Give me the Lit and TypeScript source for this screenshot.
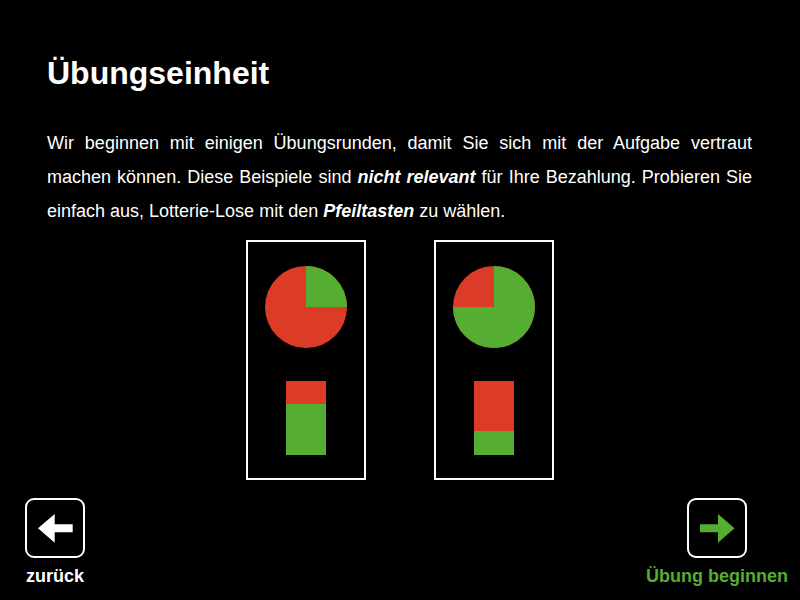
import { LitElement, html, css, svg } from "lit";
import { customElement, property } from "lit/decorators.js";

/** A lottery ticket: a pie and a stacked bar, each split into green and red. */
@customElement("lottery-ticket")
class LotteryTicket extends LitElement {
  @property({ type: Number }) degrees = 90;
  @property({ type: Number }) level = 50;

  static styles = css`
    :host {
      display: block;
      box-sizing: border-box;
      width: 120px;
      padding: 24px 0 23px;
      border: 2px solid #fff;
    }
    .content {
      display: flex;
      flex-direction: column;
      align-items: center;
      gap: 33px;
    }
    .pie {
      display: block;
      width: 82px;
      height: 82px;
    }
    .red {
      fill: #dc3b27;
    }
    .green {
      fill: #55ad31;
    }
    .bar {
      display: flex;
      flex-direction: column;
      justify-content: flex-end;
      width: 40px;
      height: 74px;
      background: #dc3b27;
    }
    .fill {
      background: #55ad31;
    }
  `;

  render() {
    const r = 41;
    const a = (this.degrees * Math.PI) / 180;
    const x = r + r * Math.sin(a);
    const y = r - r * Math.cos(a);
    const large = this.degrees > 180 ? 1 : 0;
    return html`
      <div class="content">
        <svg class="pie" viewBox="0 0 82 82" aria-hidden="true">
          <circle class="red" cx="41" cy="41" r="41"></circle>
          ${svg`<path class="green" d="M41 41V0A41 41 0 ${large} 1 ${x} ${y}Z"></path>`}
        </svg>
        <div class="bar"><div class="fill" style="height:${this.level}%"></div></div>
      </div>
    `;
  }
}

@customElement("app-root")
class AppRoot extends LitElement {
  static styles = css`
    :host {
      display: flex;
      flex-direction: column;
      box-sizing: border-box;
      min-height: 100vh;
      background: #000;
      color: #fff;
      font-family: "Liberation Sans", Arial, sans-serif;
      font-size: 18px;
    }
    main {
      padding: 55px 48px 0 47px;
    }
    h1 {
      margin: 0;
      font-size: 32px;
      line-height: 36px;
    }
    p {
      margin: 35px 0 0;
      line-height: 34px;
      text-align: justify;
    }
    em {
      font-weight: bold;
    }
    .tickets {
      display: flex;
      justify-content: center;
      gap: 68px;
      margin-top: 12px;
    }
    nav {
      display: flex;
      justify-content: space-between;
      margin-top: auto;
      padding: 16px 12px 13px 25px;
    }
    button {
      display: flex;
      flex-direction: column;
      align-items: center;
      gap: 7px;
      margin: 0;
      padding: 0;
      border: 0;
      background: none;
      color: #fff;
      font: inherit;
      font-weight: bold;
      line-height: 22px;
      white-space: nowrap;
      cursor: pointer;
    }
    .next {
      color: #55ad31;
    }
    .key {
      box-sizing: border-box;
      width: 60px;
      height: 60px;
      border: 2px solid #fff;
      border-radius: 9px;
    }
    .arrow {
      display: block;
      width: 56px;
      height: 56px;
      fill: currentColor;
    }
  `;

  render() {
    return html`
      <main>
        <h1>Übungseinheit</h1>
        <p>
          Wir beginnen mit einigen Übungsrunden, damit Sie sich mit der Aufgabe
          vertraut machen können. Diese Beispiele sind
          <em>nicht relevant</em> für Ihre Bezahlung. Probieren Sie einfach aus,
          Lotterie-Lose mit den <em>Pfeiltasten</em> zu wählen.
        </p>
      </main>
      <div class="tickets">
        <lottery-ticket degrees="90" level="69"></lottery-ticket>
        <lottery-ticket degrees="270" level="33"></lottery-ticket>
      </div>
      <nav>
        <button type="button">
          <span class="key">
            <svg class="arrow" viewBox="0 0 56 56" aria-hidden="true">
              <path d="M11 28.3L27.7 14V24.3H45.7V32.2H27.7V42.7Z"></path>
            </svg>
          </span>
          zurück
        </button>
        <button type="button" class="next">
          <span class="key">
            <svg class="arrow" viewBox="0 0 56 56" aria-hidden="true">
              <path d="M45.5 28.3L29 14V24.3H11V32.2H29V42.7Z"></path>
            </svg>
          </span>
          Übung beginnen
        </button>
      </nav>
    `;
  }
}
